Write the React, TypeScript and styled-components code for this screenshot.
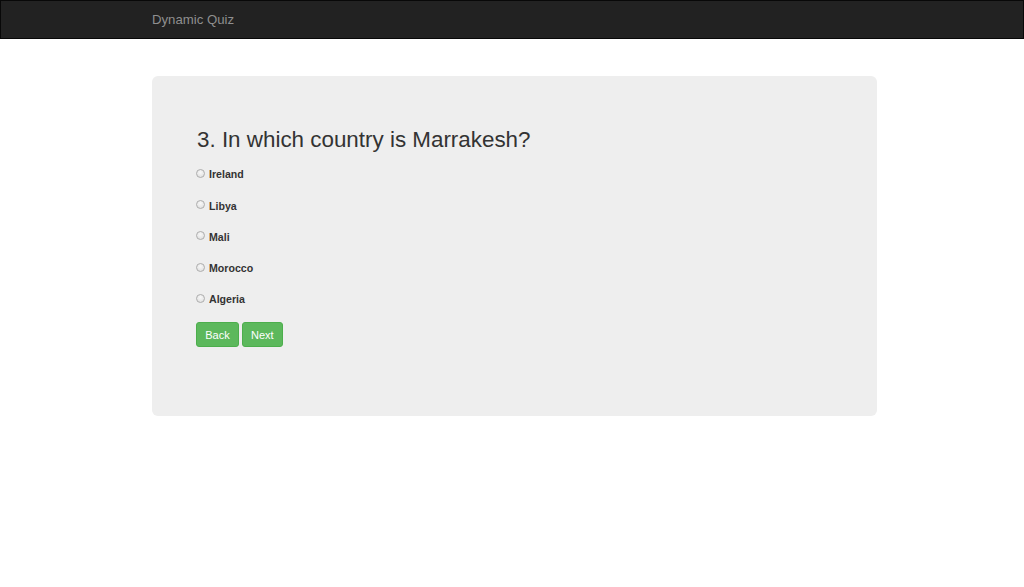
import React from "react";
import styled, { createGlobalStyle } from "styled-components";

const GlobalStyle = createGlobalStyle`
  html, body { margin: 0; padding: 0; background: #fff; }
  body {
    font-family: "Liberation Sans", Arial, Helvetica, sans-serif;
    color: #333;
  }
  * { box-sizing: border-box; }
`;

const Navbar = styled.nav`
  height: 39px;
  background: #222;
  border: 1px solid #080808;
`;

const Container = styled.div`
  padding-left: 152px;
`;

const Brand = styled.span`
  display: block;
  margin-left: -1px;
  font-size: 13.2px;
  line-height: 37px;
  color: #8f8f8f;
`;

const Jumbotron = styled.section`
  width: 725px;
  margin-top: 37px;
  background: #eee;
  border-radius: 6px;
  padding: 52px 45px 69px 44px;
`;

const Question = styled.h3`
  margin: 0 0 13.6px 1px;
  font-size: 22.4px;
  line-height: 1.1;
  font-weight: 400;
  color: #333;
`;

const Options = styled.div`
  display: flex;
  flex-direction: column;
  gap: 15.3px;
`;

const Option = styled.label`
  display: flex;
  align-items: center;
  gap: 4px;
  height: 16px;
  font-size: 10.6px;
  line-height: 16px;
  font-weight: 700;
  color: #333;
`;

const Radio = styled.input.attrs({ type: "radio" })`
  appearance: none;
  -webkit-appearance: none;
  margin: 0 0 2px 0;
  width: 9px;
  height: 9px;
  border-radius: 50%;
  border: 1px solid #adadad;
  background: radial-gradient(circle at 50% 35%, #f8f8f8 0%, #dcdcdc 100%);
  flex: none;
`;

const Actions = styled.div`
  display: flex;
  gap: 3px;
  margin-top: 14.8px;
`;

const Button = styled.button`
  height: 25px;
  padding: 0 8.2px;
  font-family: inherit;
  font-size: 11px;
  color: #fff;
  background: #5cb85c;
  border: 1px solid #4cae4c;
  border-radius: 3px;
  cursor: pointer;
`;

const options = ["Ireland", "Libya", "Mali", "Morocco", "Algeria"];

export default function App() {
  return (
    <>
      <GlobalStyle />
      <Navbar>
        <Container>
          <Brand>Dynamic Quiz</Brand>
        </Container>
      </Navbar>
      <Container>
        <Jumbotron>
          <Question>3. In which country is Marrakesh?</Question>
          <Options>
            {options.map((o) => (
              <Option key={o}>
                <Radio name="answer" value={o} />
                {o}
              </Option>
            ))}
          </Options>
          <Actions>
            <Button>Back</Button>
            <Button>Next</Button>
          </Actions>
        </Jumbotron>
      </Container>
    </>
  );
}
